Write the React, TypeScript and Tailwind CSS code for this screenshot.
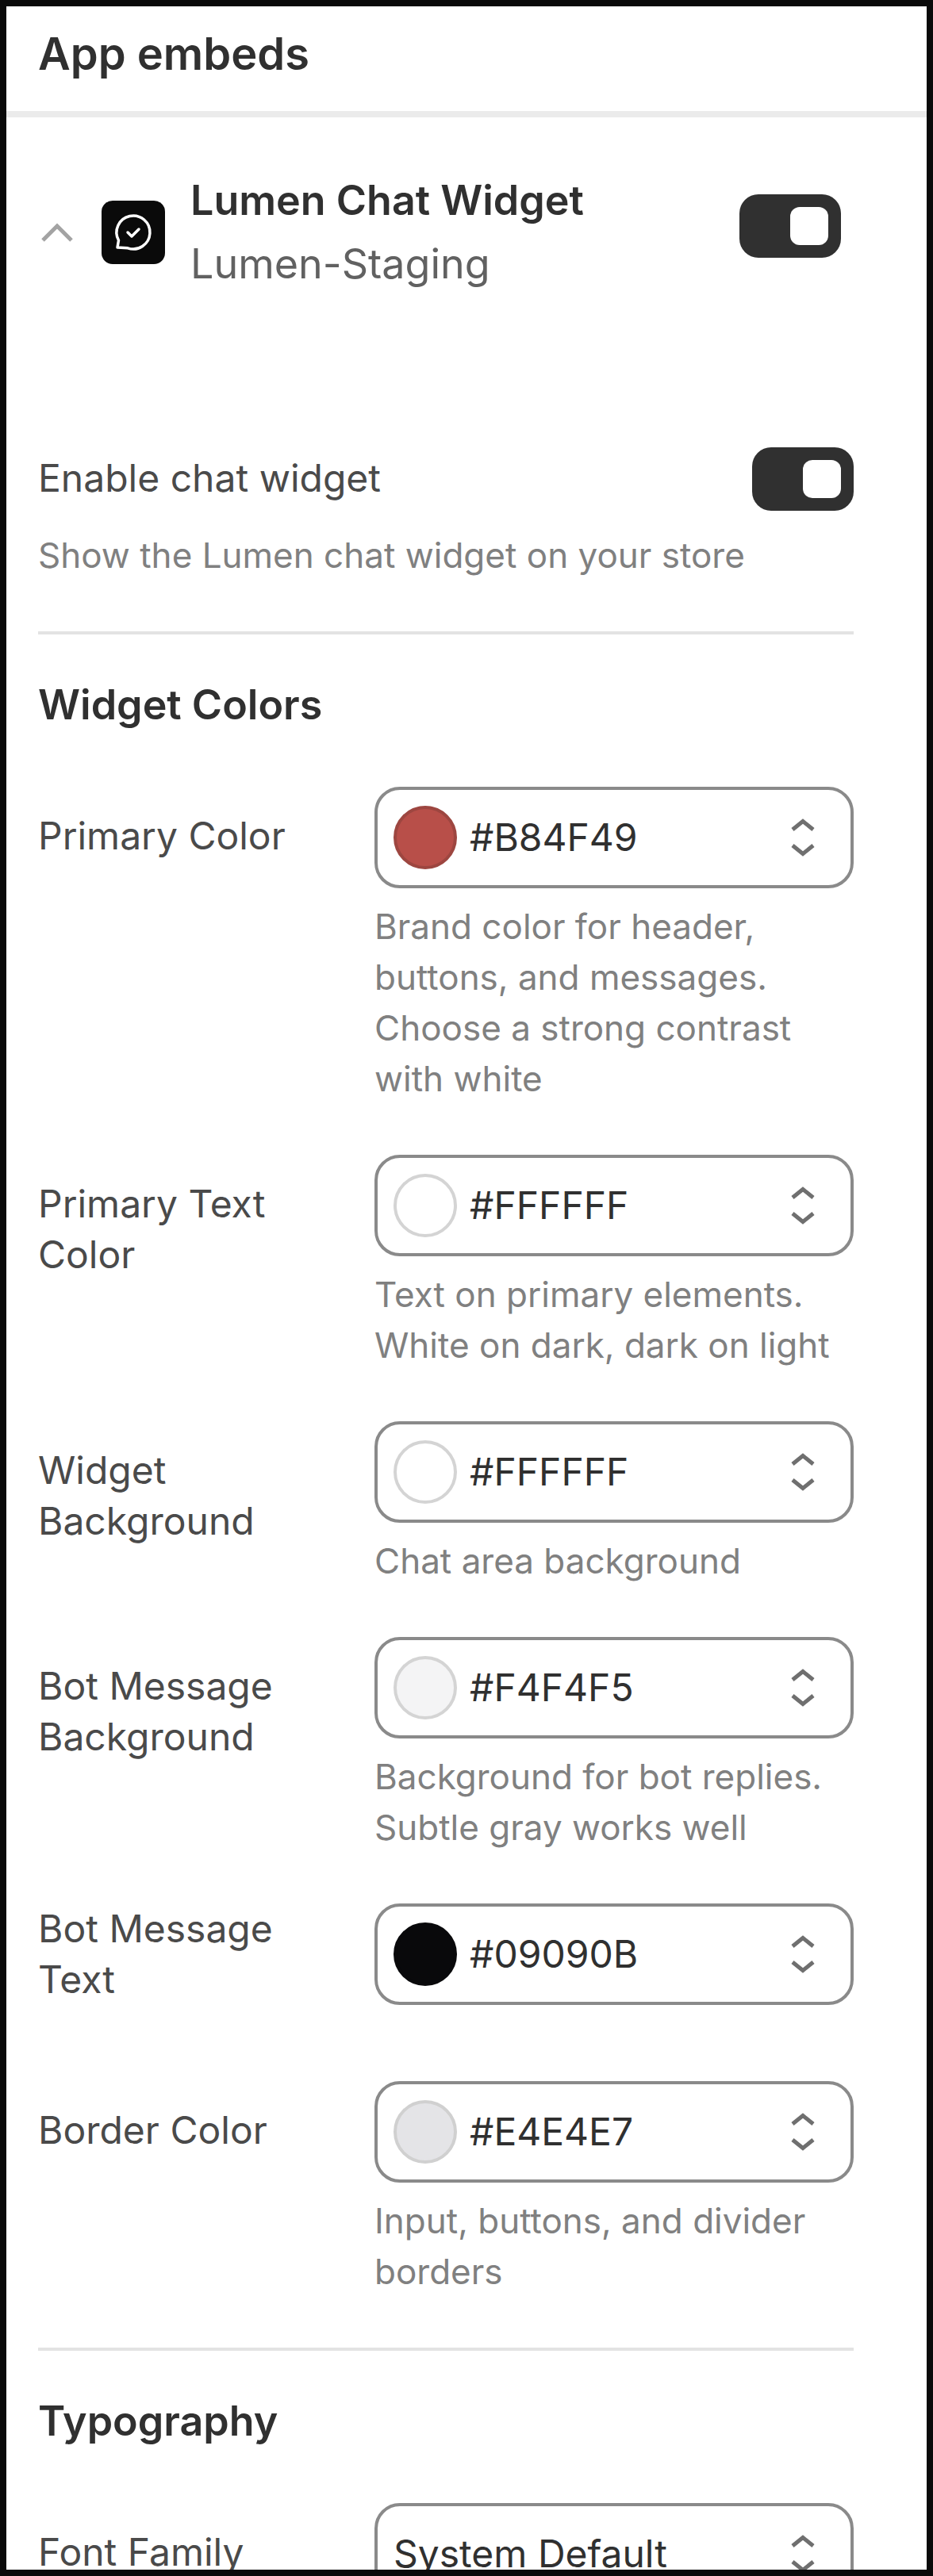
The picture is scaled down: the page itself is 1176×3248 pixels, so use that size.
type Field = {
  label: string[];
  value: string;
  swatch?: string;
  ring?: string;
  help?: string[];
  tight?: boolean;
};

const colorFields: Field[] = [
  {
    label: ["Primary Color"],
    value: "#B84F49",
    swatch: "bg-[#b84f49]",
    ring: "border-[#9d4640]",
    help: ["Brand color for header,", "buttons, and messages.", "Choose a strong contrast", "with white"],
  },
  {
    label: ["Primary Text", "Color"],
    value: "#FFFFFF",
    swatch: "bg-white",
    ring: "border-[#d4d4d4]",
    help: ["Text on primary elements.", "White on dark, dark on light"],
  },
  {
    label: ["Widget", "Background"],
    value: "#FFFFFF",
    swatch: "bg-white",
    ring: "border-[#d4d4d4]",
    help: ["Chat area background"],
  },
  {
    label: ["Bot Message", "Background"],
    value: "#F4F4F5",
    swatch: "bg-[#f4f4f5]",
    ring: "border-[#d4d4d4]",
    help: ["Background for bot replies.", "Subtle gray works well"],
  },
  {
    label: ["Bot Message", "Text"],
    value: "#09090B",
    swatch: "bg-[#09090b]",
    ring: "border-[#09090b]",
    tight: true,
  },
  {
    label: ["Border Color"],
    value: "#E4E4E7",
    swatch: "bg-[#e4e4e7]",
    ring: "border-[#d0d0d0]",
    help: ["Input, buttons, and divider", "borders"],
  },
];

function Toggle() {
  return (
    <div className="flex h-[80px] w-[128px] shrink-0 items-center justify-end rounded-[24px] bg-[#303030] pr-[16px]">
      <div className="h-[48px] w-[48px] rounded-[12px] bg-white" />
    </div>
  );
}

function Stepper() {
  return (
    <svg width="32" height="56" viewBox="0 0 32 56" fill="none" stroke="#6f6f6f" strokeWidth="5" className="shrink-0">
      <path d="M3 18 16 7.5l13 10.5" />
      <path d="M3 38l13 10.5 13-10.5" />
    </svg>
  );
}

function SelectBox({ value, swatch, ring }: { value: string; swatch?: string; ring?: string }) {
  return (
    <div className="flex h-[128px] items-center rounded-[32px] border-[4px] border-[#8a8a8a] bg-white pr-[44px] pl-[20px]">
      {swatch && <div className={`mr-[16px] h-[80px] w-[80px] shrink-0 rounded-full border-[4px] ${swatch} ${ring}`} />}
      <span className="flex-1 text-[48px] leading-[64px] text-[#303030]">{value}</span>
      <Stepper />
    </div>
  );
}

function FieldRow({ field }: { field: Field }) {
  return (
    <div className={`flex ${field.tight ? "mb-[32px]" : ""}`}>
      <div className={`w-[424px] shrink-0 text-[48px] leading-[64px] text-[#4a4a4a] ${field.tight ? "" : "pt-[30px]"}`}>
        {field.label.map((line) => (
          <div key={line}>{line}</div>
        ))}
      </div>
      <div className="min-w-0 flex-1">
        <SelectBox value={field.value} swatch={field.swatch} ring={field.ring} />
        {field.help && (
          <div className="mt-[16px] text-[44px] leading-[64px] text-[#808080]">
            {field.help.map((line) => (
              <div key={line}>{line}</div>
            ))}
          </div>
        )}
      </div>
    </div>
  );
}

export default function App() {
  return (
    <div className="h-[3248px] w-[1176px] overflow-hidden bg-[#0a0a0a] p-[8px] font-[Inter,sans-serif]">
      <div className="h-[3232px] overflow-hidden bg-white">
        <div className="flex h-[140px] items-center border-b-[8px] border-[#ebebeb] pb-[12px] pl-[40px] text-[56px] font-semibold text-[#303030]">
          App embeds
        </div>

        <div className="mt-[65px] flex items-center pr-[108px] pl-[44px]">
          <svg width="40" height="24" viewBox="0 0 40 24" fill="none" stroke="#a3a3a3" strokeWidth="5" className="shrink-0">
            <path d="M2 22 20 4l18 18" />
          </svg>
          <div className="ml-[36px] flex h-[80px] w-[80px] shrink-0 items-center justify-center rounded-[14px] bg-[#0a0a0a]">
            <svg width="56" height="56" viewBox="0 0 56 56" fill="none" stroke="#ffffff" strokeWidth="3.5" strokeLinejoin="round" strokeLinecap="round">
              <path d="M8 47 9.5 38A21 21 0 1 1 21 47.8Z" />
              <path d="M21 28l5 5 9-9" />
            </svg>
          </div>
          <div className="ml-[32px] flex-1 text-[52px] leading-[80px]">
            <div className="font-semibold text-[#303030]">Lumen Chat Widget</div>
            <div className="text-[#616161]">Lumen-Staging</div>
          </div>
          <div className="-mt-[16px]">
            <Toggle />
          </div>
        </div>

        <div className="mt-[191px] pr-[92px] pl-[40px]">
          <div className="flex items-start justify-between">
            <div className="pt-[7px] text-[48px] leading-[64px] text-[#4a4a4a]">Enable chat widget</div>
            <Toggle />
          </div>
          <div className="mt-[24px] text-[44px] leading-[64px] text-[#808080]">Show the Lumen chat widget on your store</div>

          <div className="mt-[64px] h-[4px] bg-[#e3e3e3]" />
          <div className="mt-[57px] text-[52px] leading-[64px] font-semibold text-[#303030]">Widget Colors</div>

          <div className="mt-[71px] flex flex-col gap-[64px]">
            {colorFields.map((field) => (
              <FieldRow key={field.value + field.label[0]} field={field} />
            ))}
          </div>

          <div className="mt-[64px] h-[4px] bg-[#e3e3e3]" />
          <div className="mt-[57px] text-[52px] leading-[64px] font-semibold text-[#303030]">Typography</div>

          <div className="mt-[71px]">
            <FieldRow field={{ label: ["Font Family"], value: "System Default" }} />
          </div>
        </div>
      </div>
    </div>
  );
}
